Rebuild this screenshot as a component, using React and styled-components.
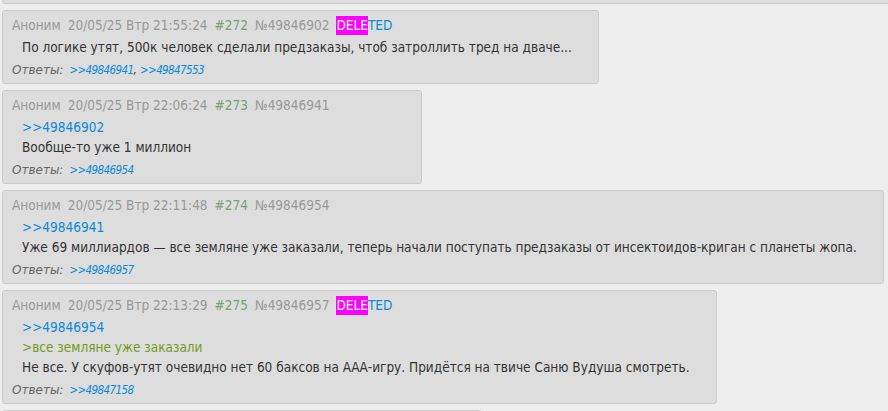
import styled, { createGlobalStyle } from "styled-components";

const Global = createGlobalStyle`
  html, body {
    margin: 0;
    padding: 0;
    background: #eeeeee;
    font-family: "DejaVu Sans Condensed", "DejaVu Sans", Verdana, sans-serif;
  }
  #root {
    height: 411px;
    overflow: hidden;
  }
`;

const posts = [
  {
    time: "20/05/25 Втр 21:55:24",
    n: 272,
    num: "49846902",
    deleted: true,
    body: [{ t: "text", v: "По логике утят, 500к человек сделали предзаказы, чтоб затроллить тред на дваче..." }],
    replies: ["49846941", "49847553"],
  },
  {
    time: "20/05/25 Втр 22:06:24",
    n: 273,
    num: "49846941",
    body: [
      { t: "link", v: "49846902" },
      { t: "text", v: "Вообще-то уже 1 миллион" },
    ],
    replies: ["49846954"],
  },
  {
    time: "20/05/25 Втр 22:11:48",
    n: 274,
    num: "49846954",
    body: [
      { t: "link", v: "49846941" },
      {
        t: "text",
        v: "Уже 69 миллиардов — все земляне уже заказали, теперь начали поступать предзаказы от инсектоидов-криган с планеты жопа.",
      },
    ],
    replies: ["49846957"],
  },
  {
    time: "20/05/25 Втр 22:13:29",
    n: 275,
    num: "49846957",
    deleted: true,
    body: [
      { t: "link", v: "49846954" },
      { t: "quote", v: ">все земляне уже заказали" },
      { t: "text", v: "Не все. У скуфов-утят очевидно нет 60 баксов на ААА-игру. Придётся на твиче Саню Вудуша смотреть." },
    ],
    replies: ["49847158"],
  },
];

export default function App() {
  return (
    <>
      <Global />
      <Thread>
        <EdgePost $top />
        {posts.map((p) => (
          <Post key={p.num}>
            <Head>
              <Name>Аноним</Name>
              <span>{p.time}</span>
              <Count>#{p.n}</Count>
              <span>№{p.num}</span>
              {p.deleted && (
                <Deleted>
                  <mark>DELE</mark>TED
                </Deleted>
              )}
            </Head>
            <Body>
              {p.body.map((b, i) =>
                b.t === "link" ? (
                  <Line key={i}>
                    <Link>&gt;&gt;{b.v}</Link>
                  </Line>
                ) : b.t === "quote" ? (
                  <Quote key={i}>{b.v}</Quote>
                ) : (
                  <Line key={i}>{b.v}</Line>
                )
              )}
            </Body>
            <Replies>
              <Label>Ответы:</Label>
              {p.replies.map((r, i) => (
                <span key={r}>
                  {i > 0 && ", "}
                  <ReplyLink>&gt;&gt;{r}</ReplyLink>
                </span>
              ))}
            </Replies>
          </Post>
        ))}
        <EdgePost />
      </Thread>
    </>
  );
}

const Thread = styled.div`
  display: flex;
  flex-direction: column;
  align-items: flex-start;
  gap: 6px;
  margin-top: -8px;
  padding: 0 2px;
`;

const EdgePost = styled.div`
  width: ${(p) => (p.$top ? "890px" : "478px")};
  height: 10px;
  background: #dddddd;
  border: 1px solid #cccccc;
  border-radius: 3px;
  flex-shrink: 0;
`;

const Post = styled.div`
  box-sizing: border-box;
  min-width: 420px;
  background: #dddddd;
  border: 1px solid #cccccc;
  border-radius: 3px;
  padding: 4px 26px 5px 9px;
  color: #333333;
`;

const Head = styled.div`
  display: flex;
  align-items: baseline;
  gap: 7px;
  height: 20px;
  font-size: 13.5px;
  line-height: 20px;
  color: #999999;
  white-space: nowrap;
`;

const Name = styled.span`
  color: #999999;
`;

const Count = styled.span`
  color: #789f78;
`;

const Deleted = styled.span`
  color: #0a8ad6;
  mark {
    background: #ff00ff;
    color: #ffffff;
    padding: 1px 0 2px;
  }
`;

const Body = styled.div`
  padding: 2px 0 0 10px;
  font-size: 13.5px;
`;

const Line = styled.div`
  line-height: 20px;
  white-space: nowrap;
`;

const Link = styled.a`
  color: #0a8ad6;
  text-decoration: none;
  cursor: pointer;
`;

const Quote = styled.div`
  line-height: 20px;
  color: #789922;
`;

const Replies = styled.div`
  display: flex;
  align-items: baseline;
  height: 16px;
  margin-top: 5px;
  font-size: 11.5px;
  line-height: 16px;
  font-style: italic;
  color: #333333;
  white-space: pre;
`;

const Label = styled.span`
  font-family: "DejaVu Sans", Verdana, sans-serif;
  font-size: 12px;
  color: #666666;
  margin-right: 6px;
`;

const ReplyLink = styled(Link)`
  letter-spacing: -0.6px;
`;
